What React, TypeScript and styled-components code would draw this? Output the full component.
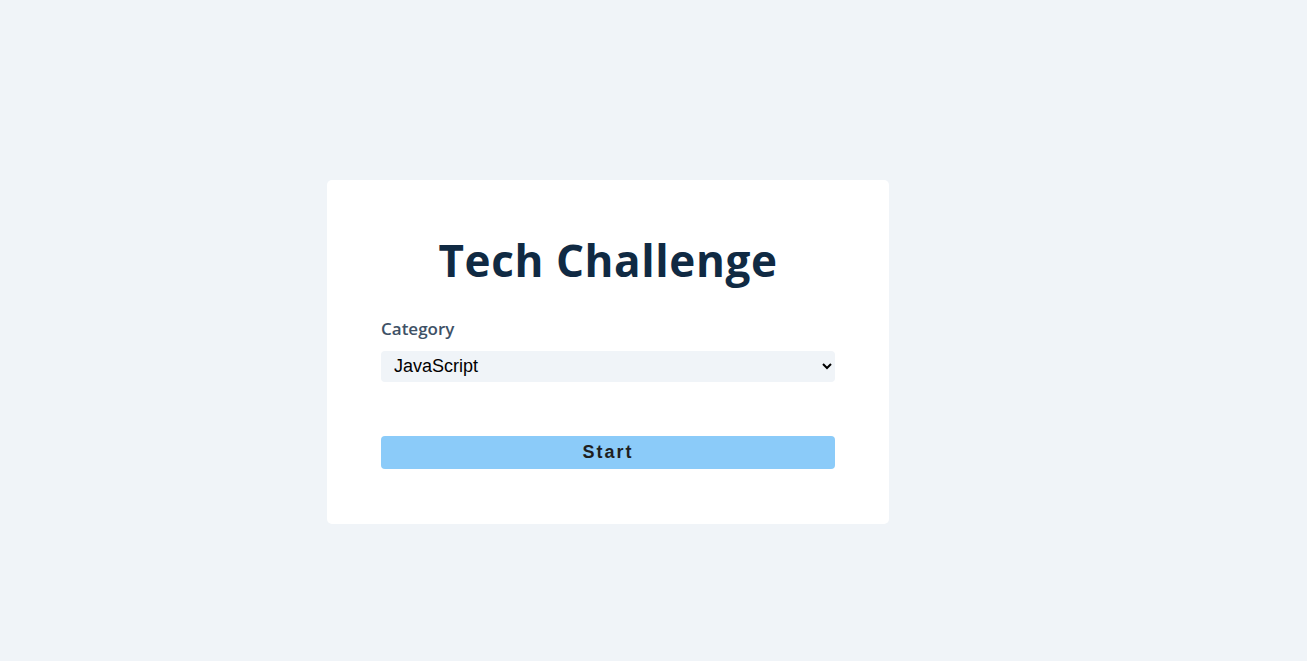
import React from "react";
import styled, { createGlobalStyle } from "styled-components";

const Global = createGlobalStyle`
  html, body { margin: 0; padding: 0; }
  body { background: #f0f4f8; font-family: "Open Sans", "Noto Sans", sans-serif; }
`;

const Page = styled.div`
  min-height: 661px;
  display: flex;
  align-items: center;
  justify-content: center;
  padding: 42px 91px 0 0;
  box-sizing: border-box;
`;

const Card = styled.div`
  width: 562px;
  height: 344px;
  box-sizing: border-box;
  background: #ffffff;
  border-radius: 5px;
  padding: 52px 54px 54px;
  display: flex;
  flex-direction: column;
`;

const Title = styled.h1`
  margin: 0 0 30px;
  text-align: center;
  font-family: "Open Sans", "Noto Sans", sans-serif;
  font-weight: 700;
  font-size: 44px;
  line-height: 56px;
  letter-spacing: 0.6px;
  color: #102a43;
`;

const Label = styled.label`
  display: block;
  font-family: "Open Sans", sans-serif;
  font-weight: 600;
  font-size: 17px;
  line-height: 22px;
  color: #3e5166;
  margin-bottom: 11px;
`;

const Select = styled.select`
  width: 100%;
  height: 31px;
  flex: 0 0 31px;
  border: none;
  border-radius: 4px;
  background: #f0f4f8;
  font-family: "Liberation Sans", Arial, sans-serif;
  font-size: 18px;
  color: #000;
  padding: 0 9px;
  outline: none;
`;

const Button = styled.button`
  margin-top: 54px;
  width: 100%;
  height: 33px;
  flex: 0 0 33px;
  border: none;
  border-radius: 4px;
  background: #8bcbf9;
  font-family: "Liberation Sans", Arial, sans-serif;
  font-weight: 700;
  font-size: 18px;
  letter-spacing: 2px;
  color: #1f1f1f;
  cursor: pointer;
`;

export default function App() {
  return (
    <>
      <Global />
      <Page>
        <Card>
          <Title>Tech Challenge</Title>
          <Label htmlFor="cat">Category</Label>
          <Select id="cat" defaultValue="js">
            <option value="js">JavaScript</option>
            <option value="py">Python</option>
          </Select>
          <Button>Start</Button>
        </Card>
      </Page>
    </>
  );
}
